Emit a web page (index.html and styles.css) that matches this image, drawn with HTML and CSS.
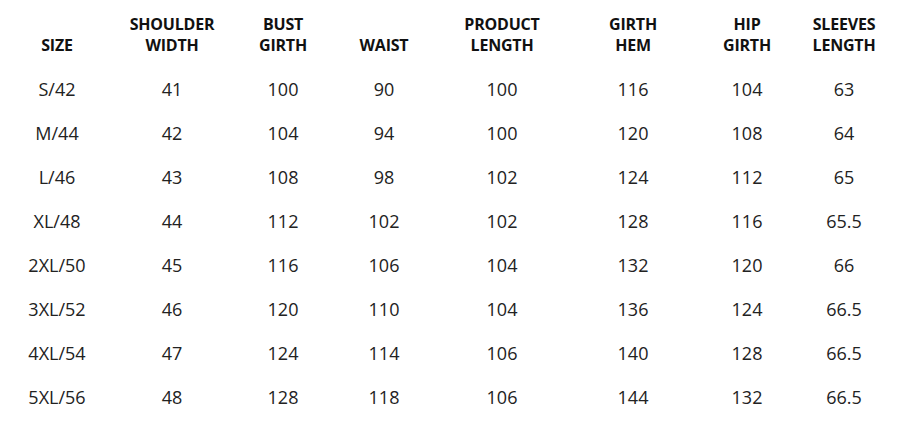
FILE: index.html
```html
<!DOCTYPE html>
<html>
<head>
<meta charset="utf-8">
<link rel="stylesheet" href="styles.css">
</head>
<body>
<div class="table">
  <div class="row head">
    <div>SIZE</div>
    <div>SHOULDER<br>WIDTH</div>
    <div>BUST<br>GIRTH</div>
    <div>WAIST</div>
    <div>PRODUCT<br>LENGTH</div>
    <div>GIRTH<br>HEM</div>
    <div>HIP<br>GIRTH</div>
    <div>SLEEVES<br>LENGTH</div>
  </div>
  <div class="body">
    <div class="row"><div>S/42</div><div>41</div><div>100</div><div>90</div><div>100</div><div>116</div><div>104</div><div>63</div></div>
    <div class="row"><div>M/44</div><div>42</div><div>104</div><div>94</div><div>100</div><div>120</div><div>108</div><div>64</div></div>
    <div class="row"><div>L/46</div><div>43</div><div>108</div><div>98</div><div>102</div><div>124</div><div>112</div><div>65</div></div>
    <div class="row"><div>XL/48</div><div>44</div><div>112</div><div>102</div><div>102</div><div>128</div><div>116</div><div>65.5</div></div>
    <div class="row"><div>2XL/50</div><div>45</div><div>116</div><div>106</div><div>104</div><div>132</div><div>120</div><div>66</div></div>
    <div class="row"><div>3XL/52</div><div>46</div><div>120</div><div>110</div><div>104</div><div>136</div><div>124</div><div>66.5</div></div>
    <div class="row"><div>4XL/54</div><div>47</div><div>124</div><div>114</div><div>106</div><div>140</div><div>128</div><div>66.5</div></div>
    <div class="row"><div>5XL/56</div><div>48</div><div>128</div><div>118</div><div>106</div><div>144</div><div>132</div><div>66.5</div></div>
  </div>
</div>
</body>
</html>
```
FILE: styles.css
```css
html, body {
  margin: 0;
  padding: 0;
  background: #fff;
}
body {
  font-family: "Open Sans", "DejaVu Sans", sans-serif;
  color: #222;
  width: 909px;
  height: 422px;
  overflow: hidden;
}
.table {
  padding-top: 14px;
}
.row {
  display: grid;
  grid-template-columns: 114px 116px 106px 96px 140px 122px 106px 88px;
  text-align: center;
}
.head {
  align-items: end;
  font-weight: 700;
  font-size: 16px;
  line-height: 21px;
  letter-spacing: -0.2px;
  color: #111;
}
.body {
  margin-top: 11px;
}
.body .row {
  font-size: 18px;
  line-height: 44px;
  height: 44px;
}
```
